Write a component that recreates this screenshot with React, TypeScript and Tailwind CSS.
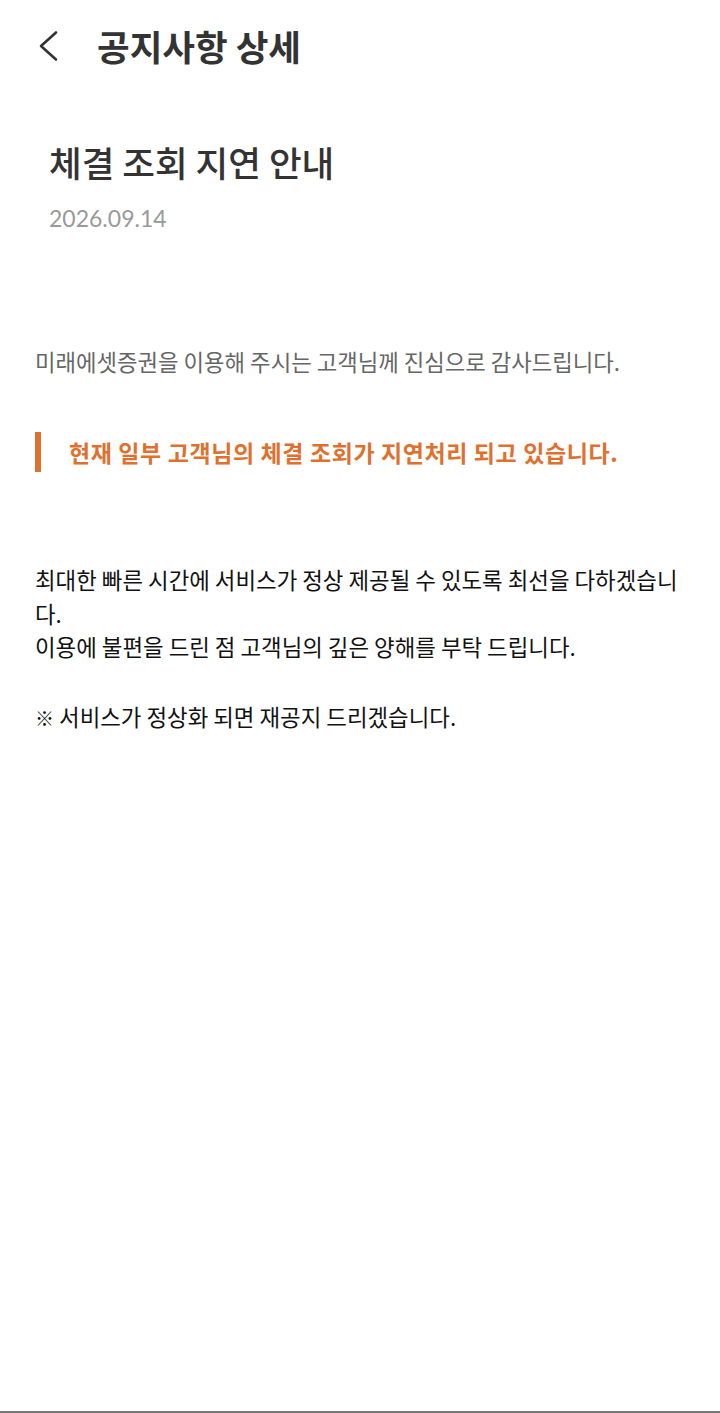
const font = { fontFamily: '"Noto Sans CJK KR", "Noto Sans", sans-serif' };

export default function App() {
    return (
        <div className="flex min-h-[1413px] w-[720px] flex-col bg-white" style={font}>
            {/* Header */}
            <header className="flex h-[92px] items-center">
                <div className="flex w-[97px] pl-[38px]">
                    <svg width="22" height="32" viewBox="0 0 22 32" fill="none">
                        <polyline points="18,2.5 3,16 18,29.5" stroke="#333" strokeWidth="2.6" strokeLinecap="round" strokeLinejoin="round" />
                    </svg>
                </div>
                <h1 className="text-[35.5px] font-bold leading-none text-[#333]">공지사항 상세</h1>
            </header>

            <main className="flex-1">
                <section className="px-[49px] pt-[48px]">
                    <h2 className="text-[35.5px] font-medium leading-[44px] text-[#333]">체결 조회 지연 안내</h2>
                    <p className="mt-[19px] text-[23px] leading-[30px] text-[#999]" style={{ fontFamily: 'Lato, "Noto Sans", sans-serif' }}>
                        2026.09.14
                    </p>
                </section>

                <section className="px-[35px] pt-[111px]">
                    <p className="text-[22.3px] leading-[34px] text-[#666]">
                        미래에셋증권을 이용해 주시는 고객님께 진심으로 감사드립니다.
                    </p>

                    <div className="mt-[54px] flex items-center gap-[28px]">
                        <div className="h-[40px] w-[6px] bg-[#e0702e]" />
                        <p className="text-[23px] font-bold leading-[34px] tracking-[0.6px] text-[#e0702e]">
                            현재 일부 고객님의 체결 조회가 지연처리 되고 있습니다.
                        </p>
                    </div>

                    <div className="mt-[91px] text-[22.4px] leading-[33.5px] text-[#111]">
                        <p>최대한 빠른 시간에 서비스가 정상 제공될 수 있도록 최선을 다하겠습니다.</p>
                        <p>이용에 불편을 드린 점 고객님의 깊은 양해를 부탁 드립니다.</p>
                        <p className="mt-[36px]">
                            <span className="text-[19px]">※</span> 서비스가 정상화 되면 재공지 드리겠습니다.
                        </p>
                    </div>
                </section>
            </main>

            <div className="h-[2px] bg-[#777]" />
        </div>
    );
}
